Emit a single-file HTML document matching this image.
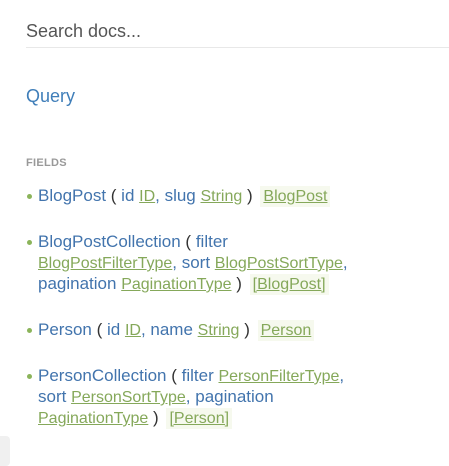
<!DOCTYPE html>
<html><head><style>
body{margin:0;width:449px;height:460px;overflow:hidden;background:#fff;font-family:"Liberation Sans",sans-serif;position:relative}
.search{position:absolute;left:26px;top:19px;width:423px;height:28px;border-bottom:1px solid #e8e8e8;font-size:18px;color:#555;line-height:24px}
.q{position:absolute;left:26px;top:86px;font-size:18px;color:#3f7eb9}
.f{position:absolute;left:26px;top:157px;font-size:11px;font-weight:bold;color:#999;letter-spacing:.3px}
ul{position:absolute;left:26px;top:185px;margin:0;padding:0;list-style:none;width:330px}
li{position:relative;padding-left:12px;font-size:17px;line-height:21px;color:#4274ad;margin-bottom:25px}
li:before{content:"";position:absolute;left:1px;top:9px;width:5px;height:5px;border-radius:50%;background:#8bb45a}
a{color:#85a85a;text-decoration:underline;font-size:16px;line-height:1}
.r{background:#f6f9ee;padding:2px 3px;margin-left:3px}
.p{color:#333}
.tab{position:absolute;left:-4px;top:436px;width:14px;height:30px;background:#f0f0f0;border-radius:4px}
</style></head><body>
<div class="search">Search docs...</div>
<div class="q">Query</div>
<div class="f">FIELDS</div>
<ul>
<li>BlogPost <span class="p">(</span> id <a>ID</a>, slug <a>String</a> <span class="p">)</span> <a class="r">BlogPost</a></li>
<li>BlogPostCollection <span class="p">(</span> filter <a>BlogPostFilterType</a>, sort <a>BlogPostSortType</a>, pagination <a>PaginationType</a> <span class="p">)</span> <a class="r">[BlogPost]</a></li>
<li>Person <span class="p">(</span> id <a>ID</a>, name <a>String</a> <span class="p">)</span> <a class="r">Person</a></li>
<li>PersonCollection <span class="p">(</span> filter <a>PersonFilterType</a>, sort <a>PersonSortType</a>, pagination <a>PaginationType</a> <span class="p">)</span> <a class="r">[Person]</a></li>
</ul>
<div class="tab"></div>
</body></html>
